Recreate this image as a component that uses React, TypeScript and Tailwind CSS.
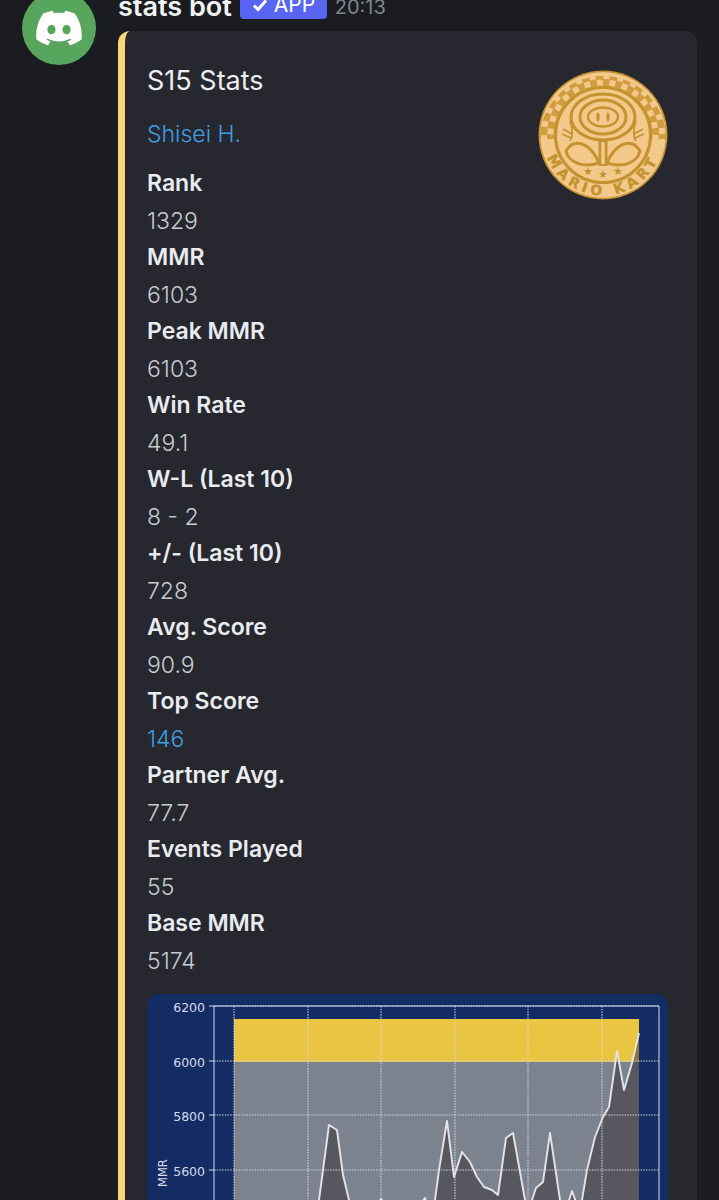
const stats: [string, string, boolean?][] = [
  ['Rank', '1329'],
  ['MMR', '6103'],
  ['Peak MMR', '6103'],
  ['Win Rate', '49.1'],
  ['W-L (Last 10)', '8 - 2'],
  ['+/- (Last 10)', '728'],
  ['Avg. Score', '90.9'],
  ['Top Score', '146', true],
  ['Partner Avg.', '77.7'],
  ['Events Played', '55'],
  ['Base MMR', '5174'],
];

const linePoints = '234,1290 310,1240 319,1200 323,1170 329,1125 337,1130 343,1175 349,1200 362,1225 381,1199 392,1212 412,1215 425,1198 430,1212 435,1200 439,1170 447,1121 454,1177 462,1152 470,1162 477,1177 484,1187 492,1190 498,1195 506,1138 513,1133 525,1200 530,1210 532,1200 536,1188 543,1182 550,1133 560,1200 566,1210 572,1191 577,1205 582,1200 587,1170 595,1137 603,1117 609,1107 617,1051 624,1090 632,1063 639,1033';

function DiscordLogo() {
  return (
    <svg viewBox="0 0 24 24" className="w-[52px] h-[52px]" fill="#fff">
      <path d="M19.27 5.33C17.94 4.71 16.5 4.26 15 4a.09.09 0 0 0-.07.03c-.18.33-.39.76-.53 1.09a16.09 16.09 0 0 0-4.8 0c-.14-.34-.35-.76-.54-1.09-.01-.02-.04-.03-.07-.03-1.5.26-2.93.71-4.27 1.33-.01 0-.02.01-.03.02-2.72 4.07-3.47 8.03-3.1 11.95 0 .02.01.04.03.05 1.8 1.32 3.53 2.12 5.24 2.65.03.01.06 0 .07-.02.4-.55.76-1.13 1.07-1.74.02-.04 0-.08-.04-.09-.57-.22-1.11-.48-1.64-.78-.04-.02-.04-.08-.01-.11.11-.08.22-.17.33-.25.02-.02.05-.02.07-.01 3.44 1.57 7.15 1.57 10.55 0 .02-.01.05-.01.07.01.11.09.22.17.33.26.04.03.04.09-.01.11-.52.31-1.07.56-1.64.78-.04.01-.05.06-.04.09.32.61.68 1.19 1.07 1.74.03.01.06.02.09.01 1.72-.53 3.45-1.33 5.25-2.65.02-.01.03-.03.03-.05.44-4.53-.73-8.46-3.1-11.95-.01-.01-.02-.02-.04-.02zM8.52 14.91c-1.03 0-1.89-.95-1.89-2.12s.84-2.12 1.89-2.12c1.06 0 1.9.96 1.89 2.12 0 1.17-.84 2.12-1.89 2.12zm6.97 0c-1.03 0-1.89-.95-1.89-2.12s.84-2.12 1.89-2.12c1.06 0 1.9.96 1.89 2.12 0 1.17-.83 2.12-1.89 2.12z" />
    </svg>
  );
}

function Medal() {
  const gold = '#c4922f';
  const light = '#f2c98b';
  const squares = [];
  for (let i = 0; i < 28; i++) {
    const a = 177 + (i * 186) / 27;
    for (let r = 0; r < 2; r++) {
      if ((i + r) % 2 === 0) {
        squares.push(
          <rect
            key={`${i}-${r}`}
            x={-3}
            y={-3}
            width={6}
            height={6}
            fill={light}
            transform={`rotate(${a}) translate(${r === 0 ? 59 : 52.5}, 0)`}
          />,
        );
      }
    }
  }
  return (
    <svg viewBox="-65 -65 130 130" className="w-[130px] h-[130px]">
      <defs>
        <path id="medal-arc" d="M-60 5 A60.2 60.2 0 0 0 60 5" />
      </defs>
      <circle r="64.5" fill={gold} />
      <circle r="62.8" fill={light} />
      <path d="M-63 4 A63 63 0 0 1 63 4 Z" fill="#cf9c3e" />
      {squares}
      <circle r="47.5" fill={light} stroke={gold} strokeWidth="3.2" />
      <text
        fontFamily="'DejaVu Sans', sans-serif"
        fontWeight="700"
        fontSize="14"
        letterSpacing="4.4"
        fill={gold}
        stroke={gold}
        strokeWidth="0.4"
      >
        <textPath href="#medal-arc" startOffset="50%" textAnchor="middle">MARIO KART</textPath>
      </text>
      <g fill="none" stroke={gold} strokeWidth="3">
        <path d="M-33 -14 C-30 -6 -30 1 -33 6 M33 -14 C30 -6 30 1 33 6" strokeWidth="1.8" />
        <path d="M-40 -6 L-31 -1 M-41 -1 L-32 3 M40 -6 L31 -1 M41 -1 L32 3" strokeWidth="1.8" />
        <ellipse cx="0" cy="-18" rx="32" ry="23" fill={light} />
        <ellipse cx="0" cy="-18" rx="23" ry="17" />
        <ellipse cx="0" cy="-18" rx="15" ry="9.5" strokeWidth="2.4" />
        <path d="M-37 16 C-30 4 -14 5 -4 28 C-20 33 -34 28 -37 16 Z" />
        <path d="M37 16 C30 4 14 5 4 28 C20 33 34 28 37 16 Z" />
        <path d="M0 5 L0 31" strokeWidth="9" stroke={gold} />
        <path d="M0 7 L0 29" strokeWidth="3.5" stroke={light} />
      </g>
      <ellipse cx="-5" cy="-18" rx="1.6" ry="4.5" fill={gold} />
      <ellipse cx="5" cy="-18" rx="1.6" ry="4.5" fill={gold} />
      <g fill={gold} fontSize="11" textAnchor="middle" fontFamily="'DejaVu Sans', sans-serif">
        <text x="-15" y="40">★</text>
        <text x="0" y="43">★</text>
        <text x="15" y="40">★</text>
      </g>
    </svg>
  );
}

function Chart() {
  const gridY = [1006, 1061, 1115, 1170];
  const gridX = [234, 308, 381, 455, 528, 602];
  const labels: [string, number][] = [['6200', 1006], ['6000', 1061], ['5800', 1115], ['5600', 1170]];
  return (
    <svg viewBox="147 994 520 260" className="w-[520px] h-[260px] block">
      <rect x="234" y="1019" width="405" height="43" fill="#e9c542" />
      <rect x="234" y="1062" width="405" height="200" fill="#7d828f" />
      <polygon points={`${linePoints} 639,1290`} fill="#3a3539" fillOpacity="0.55" />
      <g stroke="#d5d9e2" strokeWidth="1.1" strokeDasharray="1.6 1.1" opacity="0.9">
        {gridY.map((y) => <line key={y} x1="214" x2="659" y1={y} y2={y} />)}
        {gridX.map((x) => <line key={x} x1={x} x2={x} y1="1006" y2="1260" />)}
      </g>
      <polyline points={linePoints} fill="none" stroke="#e4e4e8" strokeWidth="1.9" strokeLinejoin="round" />
      <path d="M214 1260 V1006 H659 V1260" fill="none" stroke="#d5dbe8" strokeWidth="1" />
      <g stroke="#d5dbe8" strokeWidth="1">
        {gridY.map((y) => <line key={y} x1="209" x2="214" y1={y} y2={y} />)}
      </g>
      <g fill="#d5dbe8" fontSize="12.5" fontFamily="'DejaVu Sans', sans-serif" textAnchor="end">
        {labels.map(([t, y]) => <text key={t} x="205" y={y + 5.5}>{t}</text>)}
      </g>
      <text
        transform="translate(167,1187) rotate(-90)"
        fill="#d5dbe8"
        fontSize="11.5"
        fontFamily="'DejaVu Sans', sans-serif"
      >
        MMR
      </text>
    </svg>
  );
}

export default function App() {
  return (
    <div className="h-[1200px] overflow-hidden bg-[#1b1c20] font-['Inter',sans-serif] antialiased">
      <div className="flex pl-[22px] -mt-[9px]">
        <div className="w-[74px] h-[74px] rounded-full bg-[#58a55e] flex items-center justify-center shrink-0">
          <DiscordLogo />
        </div>
        <div className="ml-[22px] w-[579px] min-w-0">
          <div className="flex items-center h-[28px]">
            <span className="text-[27px] font-semibold text-[#f2f3f5] relative top-[2px]">stats bot</span>
            <span className="ml-[8px] h-[28px] w-[87px] pl-[12px] rounded-[4px] bg-[#5865f2] text-white text-[21px] flex items-center gap-[6px]">
              <svg viewBox="0 0 16 16" className="w-[16px] h-[16px]" fill="none" stroke="#fff" strokeWidth="3">
                <path d="M2 8.5 L6 12.5 L14 3.5" />
              </svg>
              APP
            </span>
            <span className="ml-[8px] text-[20px] text-[#80848e] relative top-[2px]">20:13</span>
          </div>
          <div className="mt-[12px] flex rounded-[12px] overflow-hidden bg-[#26272f] border-l-[7px] border-[#f7d774]">
            <div className="pl-[22px] pt-[32px] pr-[29px] flex-1 min-w-0 relative">
              <div className="text-[27px] leading-[36px] text-[#eceef1]">S15 Stats</div>
              <div className="mt-[17px] text-[23px] leading-[36px] font-light text-[#3f9fe3]">Shisei H.</div>
              <div className="mt-[13px]">
                {stats.map(([label, value, link]) => (
                  <div key={label}>
                    <div className="text-[23px] leading-[37px] font-semibold text-[#e9ebee]">{label}</div>
                    <div className={`text-[23px] h-[37px] leading-[39px] font-light ${link ? 'text-[#3f9fe3]' : 'text-[#c9cbd1]'}`}>{value}</div>
                  </div>
                ))}
              </div>
              <div className="absolute right-[29px] top-[39px]">
                <Medal />
              </div>
              <div className="mt-[15px] rounded-[12px] overflow-hidden bg-[#132c63]">
                <Chart />
              </div>
            </div>
          </div>
        </div>
      </div>
    </div>
  );
}
